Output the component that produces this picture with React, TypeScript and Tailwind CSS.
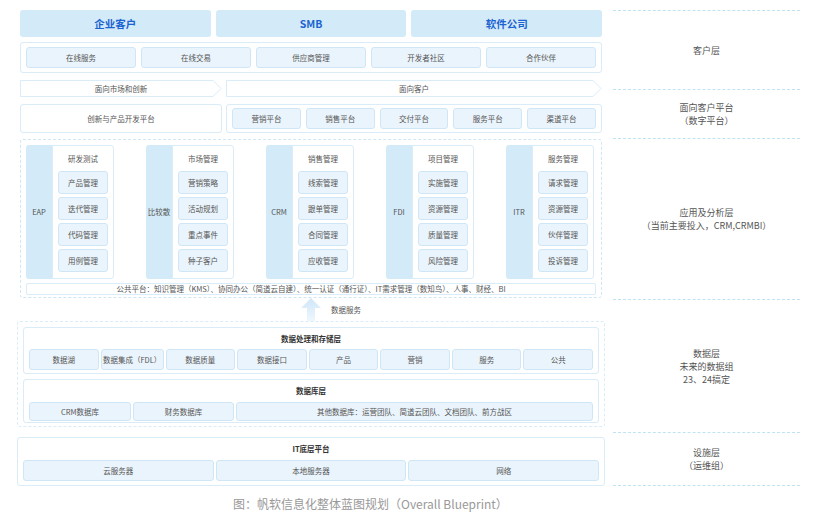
import React from 'react';

const font = { fontFamily: '"Noto Sans CJK SC", "Noto Sans", sans-serif' };

const Cell: React.FC<{ children: React.ReactNode; className?: string }> = ({ children, className = '' }) => (
  <div className={`flex items-center justify-center rounded-[3px] border border-[#cfe6f6] bg-[#eaf4fc] text-[7.5px] text-[#555] ${className}`}>
    {children}
  </div>
);

const AppGroup: React.FC<{ code: string; title: string; items: string[] }> = ({ code, title, items }) => (
  <div className="flex h-[134px] w-[89px]">
    <div className="flex w-[26px] items-center justify-center rounded-l-[3px] bg-[#d3eaf8] text-[7.5px] text-[#555]">{code}</div>
    <div className="flex w-[62px] flex-col items-center gap-[3px] rounded-r-[3px] border border-[#d9ecf8] bg-white px-[5px] pt-[7px]">
      <div className="mb-[4px] text-[7.5px] text-[#555]">{title}</div>
      {items.map((i) => (
        <Cell key={i} className="h-[23px] w-full">{i}</Cell>
      ))}
    </div>
  </div>
);

const Sep = () => <div className="h-0 border-t border-dashed border-[#bfe2f5]" />;

export default function App() {
  const groups = [
    { code: 'EAP', title: '研发测试', items: ['产品管理', '迭代管理', '代码管理', '用例管理'] },
    { code: '比较散', title: '市场管理', items: ['营销策略', '活动规划', '重点事件', '种子客户'] },
    { code: 'CRM', title: '销售管理', items: ['线索管理', '跟单管理', '合同管理', '应收管理'] },
    { code: 'FDI', title: '项目管理', items: ['实施管理', '资源管理', '质量管理', '风险管理'] },
    { code: 'ITR', title: '服务管理', items: ['请求管理', '资源管理', '伙伴管理', '投诉管理'] },
  ];
  return (
    <div className="relative h-[515px] w-[835px] bg-white" style={font}>
      <div className="flex">
        {/* diagram */}
        <div className="ml-[20px] mt-[10px] flex w-[582px] flex-col">
          <div className="flex gap-[5px]">
            {['企业客户', 'SMB', '软件公司'].map((t) => (
              <div key={t} className="flex h-[27px] flex-1 items-center justify-center rounded-[3px] bg-[#d3eaf8] text-[10.5px] font-bold text-[#1b63d0]">{t}</div>
            ))}
          </div>
          <div className="mt-[5px] flex h-[31px] gap-[5px] rounded-[3px] border border-[#d9ecf8] px-[5px] py-[4px]">
            {['在线服务', '在线交易', '供应商管理', '开发者社区', '合作伙伴'].map((t) => (
              <Cell key={t} className="flex-1">{t}</Cell>
            ))}
          </div>
          <div className="mt-[7px] flex h-[17px] gap-[4px]">
            <div className="relative flex w-[202px] items-center justify-center text-[7.5px] text-[#555]">
              <svg className="absolute inset-0" width="202" height="17" viewBox="0 0 202 17">
                <path d="M0.5 0.5 H193 L201 8.5 L193 16.5 H0.5 Z" fill="white" stroke="#d9ecf8" />
              </svg>
              <span className="relative">面向市场和创新</span>
            </div>
            <div className="relative flex flex-1 items-center justify-center text-[7.5px] text-[#555]">
              <svg className="absolute inset-0" width="376" height="17" viewBox="0 0 376 17">
                <path d="M0.5 0.5 H367 L375 8.5 L367 16.5 H0.5 Z" fill="white" stroke="#d9ecf8" />
              </svg>
              <span className="relative">面向客户</span>
            </div>
          </div>
          <div className="mt-[7px] flex h-[29px] gap-[4px]">
            <div className="flex w-[202px] items-center justify-center rounded-[3px] border border-[#d9ecf8] text-[7.5px] text-[#555]">创新与产品开发平台</div>
            <div className="flex flex-1 gap-[5px] rounded-[3px] border border-[#d9ecf8] px-[5px] py-[3px]">
              {['营销平台', '销售平台', '交付平台', '服务平台', '渠道平台'].map((t) => (
                <Cell key={t} className="flex-1">{t}</Cell>
              ))}
            </div>
          </div>
          <div className="mt-[6px] flex h-[159px] flex-col rounded-[3px] border border-dashed border-[#cfe6f6] px-[5px] pt-[5px]">
            <div className="flex gap-[31px]">
              {groups.map((g) => (
                <AppGroup key={g.code} {...g} />
              ))}
            </div>
            <div className="mt-[4px] flex h-[12px] items-center justify-center rounded-[2px] border border-[#d9ecf8] text-[7.5px] text-[#555]">
              公共平台：知识管理（KMS）、协同办公（简道云自建）、统一认证（通行证）、IT需求管理（数知鸟）、人事、财经、BI
            </div>
          </div>
          <div className="flex h-[23px] items-center">
            <svg className="ml-[281px]" width="20" height="23" viewBox="0 0 20 23">
              <defs>
                <linearGradient id="ag" x1="0" y1="0" x2="0" y2="1">
                  <stop offset="0" stopColor="#cfe6f8" />
                  <stop offset="1" stopColor="#eef7fd" />
                </linearGradient>
              </defs>
              <path d="M10 0 L20 10 H14 V23 H6 V10 H0 Z" fill="url(#ag)" />
            </svg>
            <span className="ml-[10px] text-[7.5px] text-[#555]">数据服务</span>
          </div>
          <div className="-mx-[3px] flex h-[106px] flex-col gap-[5px] rounded-[3px] border border-dashed border-[#d9ecf8] px-[5px] pt-[5px]">
            <div className="flex h-[47px] flex-col rounded-[3px] border border-[#d9ecf8] px-[5px]">
              <div className="flex h-[21px] items-center justify-center text-[7.5px] font-bold text-[#333]">数据处理和存储层</div>
              <div className="flex h-[21px] gap-[2px]">
                {['数据湖', '数据集成（FDL）', '数据质量', '数据接口', '产品', '营销', '服务', '公共'].map((t) => (
                  <Cell key={t} className={t.includes('FDL') ? 'w-[63px]' : 'flex-1'}>{t}</Cell>
                ))}
              </div>
            </div>
            <div className="flex h-[44px] flex-col rounded-[3px] border border-[#d9ecf8] px-[5px]">
              <div className="flex h-[22px] items-center justify-center text-[7.5px] font-bold text-[#333]">数据库层</div>
              <div className="flex h-[19px] gap-[2px]">
                <Cell className="w-[102px]">CRM数据库</Cell>
                <Cell className="w-[101px]">财务数据库</Cell>
                <Cell className="flex-1">其他数据库：运营团队、简道云团队、文档团队、前方战区</Cell>
              </div>
            </div>
          </div>
          <div className="-mx-[3px] mt-[10px] flex h-[49px] flex-col rounded-[3px] border border-[#d9ecf8] px-[5px]">
            <div className="flex h-[22px] items-center justify-center text-[7.5px] font-bold text-[#333]">IT底层平台</div>
            <div className="flex h-[21px] gap-[2px]">
              {['云服务器', '本地服务器', '网络'].map((t) => (
                <Cell key={t} className="flex-1">{t}</Cell>
              ))}
            </div>
          </div>
          <div className="mt-[9px] pl-[213px] text-[12px] text-[#999]">图：帆软信息化整体蓝图规划（Overall Blueprint）</div>
        </div>
        {/* layer labels */}
        <div className="ml-[11px] mt-[10px] flex w-[187px] flex-col text-center text-[9px] leading-[13px] text-[#555]">
          <Sep />
          <div className="flex h-[78px] items-center justify-center">客户层</div>
          <Sep />
          <div className="flex h-[48px] items-center justify-center">面向客户平台<br />（数字平台）</div>
          <Sep />
          <div className="flex h-[160px] items-center justify-center">应用及分析层<br />（当前主要投入，CRM,CRMBI）</div>
          <Sep />
          <div className="flex h-[132px] items-center justify-center">数据层<br />未来的数据组<br />23、24搞定</div>
          <Sep />
          <div className="flex h-[52px] items-center justify-center">设施层<br />（运维组）</div>
          <Sep />
        </div>
      </div>
    </div>
  );
}
